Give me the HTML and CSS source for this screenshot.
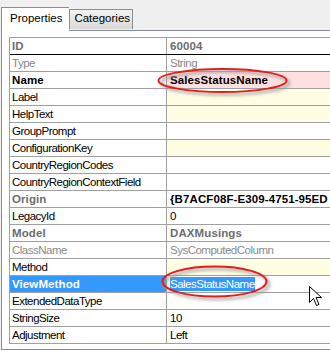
FILE: index.html
```html
<!DOCTYPE html>
<html lang="en">
<head>
    <meta charset="UTF-8">
    <title>Properties</title>
    <link rel="stylesheet" href="styles.css">
</head>
<body>
    <div class="tabs">
        <div class="tab active">Properties</div>
        <div class="tab">Categories</div>
    </div>

    <div class="panel">
        <div class="grid">
            <div class="row head">
                <div class="name bold muted">ID</div>
                <div class="value bold muted">60004</div>
            </div>
            <div class="row">
                <div class="name faint">Type</div>
                <div class="value faint">String</div>
            </div>
            <div class="row">
                <div class="name bold">Name</div>
                <div class="value bold changed">SalesStatusName</div>
            </div>
            <div class="row">
                <div class="name">Label</div>
                <div class="value empty"></div>
            </div>
            <div class="row">
                <div class="name">HelpText</div>
                <div class="value empty"></div>
            </div>
            <div class="row">
                <div class="name">GroupPrompt</div>
                <div class="value"></div>
            </div>
            <div class="row">
                <div class="name">ConfigurationKey</div>
                <div class="value empty"></div>
            </div>
            <div class="row">
                <div class="name">CountryRegionCodes</div>
                <div class="value"></div>
            </div>
            <div class="row">
                <div class="name">CountryRegionContextField</div>
                <div class="value"></div>
            </div>
            <div class="row">
                <div class="name bold muted">Origin</div>
                <div class="value bold">{B7ACF08F-E309-4751-95ED</div>
            </div>
            <div class="row">
                <div class="name">LegacyId</div>
                <div class="value">0</div>
            </div>
            <div class="row">
                <div class="name bold muted">Model</div>
                <div class="value bold muted">DAXMusings</div>
            </div>
            <div class="row">
                <div class="name faint">ClassName</div>
                <div class="value faint">SysComputedColumn</div>
            </div>
            <div class="row">
                <div class="name">Method</div>
                <div class="value empty"></div>
            </div>
            <div class="row selected">
                <div class="name bold">ViewMethod</div>
                <div class="value"><span class="highlight">SalesStatusName</span></div>
            </div>
            <div class="row">
                <div class="name">ExtendedDataType</div>
                <div class="value"></div>
            </div>
            <div class="row">
                <div class="name">StringSize</div>
                <div class="value">10</div>
            </div>
            <div class="row">
                <div class="name">Adjustment</div>
                <div class="value">Left</div>
            </div>
        </div>
    </div>

    <!-- annotations drawn over the screenshot -->
    <svg class="marks" width="330" height="350" viewBox="0 0 330 350">
        <defs>
            <filter id="soft" x="-20%" y="-50%" width="140%" height="200%">
                <feGaussianBlur stdDeviation="1.6"/>
            </filter>
        </defs>
        <g fill="none">
            <ellipse cx="225" cy="83" rx="64" ry="11.5" stroke="#9a9a9a" stroke-width="3" filter="url(#soft)" opacity="0.7"/>
            <ellipse cx="222.5" cy="80.5" rx="64" ry="11.5" stroke="#e41d1d" stroke-width="2"/>
            <ellipse cx="217" cy="284" rx="52" ry="15" stroke="#9a9a9a" stroke-width="3" filter="url(#soft)" opacity="0.7"/>
            <ellipse cx="214.5" cy="281.5" rx="52" ry="15" stroke="#e41d1d" stroke-width="2"/>
        </g>
        <path d="M309.5 286.5 L309.5 302.5 L313.5 298.5 L316.5 305.5 L319 304.5 L316 297.5 L321.5 297.5 Z"
              fill="#fff" stroke="#000" stroke-width="1" stroke-linejoin="miter"/>
    </svg>
</body>
</html>
```

FILE: styles.css
```css
* {
    margin: 0;
    padding: 0;
    box-sizing: border-box;
}

body {
    width: 330px;
    height: 350px;
    overflow: hidden;
    background: #f0f0f0;
    font-family: 'Liberation Sans', Arial, sans-serif;
    position: relative;
}

.tabs {
    display: flex;
    align-items: flex-end;
    height: 30px;
    padding-left: 1px;
}

.tab {
    height: 20px;
    padding: 2px 2px 0 4px;
    font-size: 11.5px;
    color: #000;
    background: linear-gradient(#f3f3f3 0%, #e6e6e6 50%, #d9d9d9 100%);
    border: 1px solid #898c95;
    border-bottom: none;
    margin-bottom: 1px;
}

.tab.active {
    height: 24px;
    padding: 4px 7px 0 8px;
    background: #fff;
    border-right: none;
    margin-bottom: -1px;
    position: relative;
    z-index: 1;
}

.panel {
    height: 320px;
    margin-left: 1px;
    padding: 6px 0 0 7px;
    background: #fff;
    border: 1px solid #898c95;
    border-right: none;
    overflow: hidden;
}

.grid {
    width: 420px;
    border-top: 1px solid #a0a0a0;
    border-left: 1px solid #a0a0a0;
    font-size: 11.5px;
    letter-spacing: -0.5px;
}

.row {
    display: grid;
    grid-template-columns: 157px 1fr;
    height: 17px;
    border-bottom: 1px solid #a0a0a0;
}

.row.head {
    border-bottom-color: #000;
}

.name,
.value {
    padding: 1px 0 0 2px;
    line-height: 15px;
    white-space: nowrap;
    overflow: hidden;
    color: #000;
}

.name {
    border-right: 1px solid #a0a0a0;
}

.value {
    padding-left: 3px;
}

.bold {
    font-weight: bold;
    letter-spacing: 0.1px;
}

.muted {
    color: #6d6d6d;
}

.faint {
    color: #8a8a8a;
}

.changed {
    background: #ffdfdf;
}

.empty {
    background: #fffde3;
}

.selected .name {
    background: #3399ff;
    color: #fff;
}

.highlight {
    background: #3399ff;
    color: #fff;
    padding: 1px 0;
}

.marks {
    position: absolute;
    top: 0;
    left: 0;
    pointer-events: none;
}
```
